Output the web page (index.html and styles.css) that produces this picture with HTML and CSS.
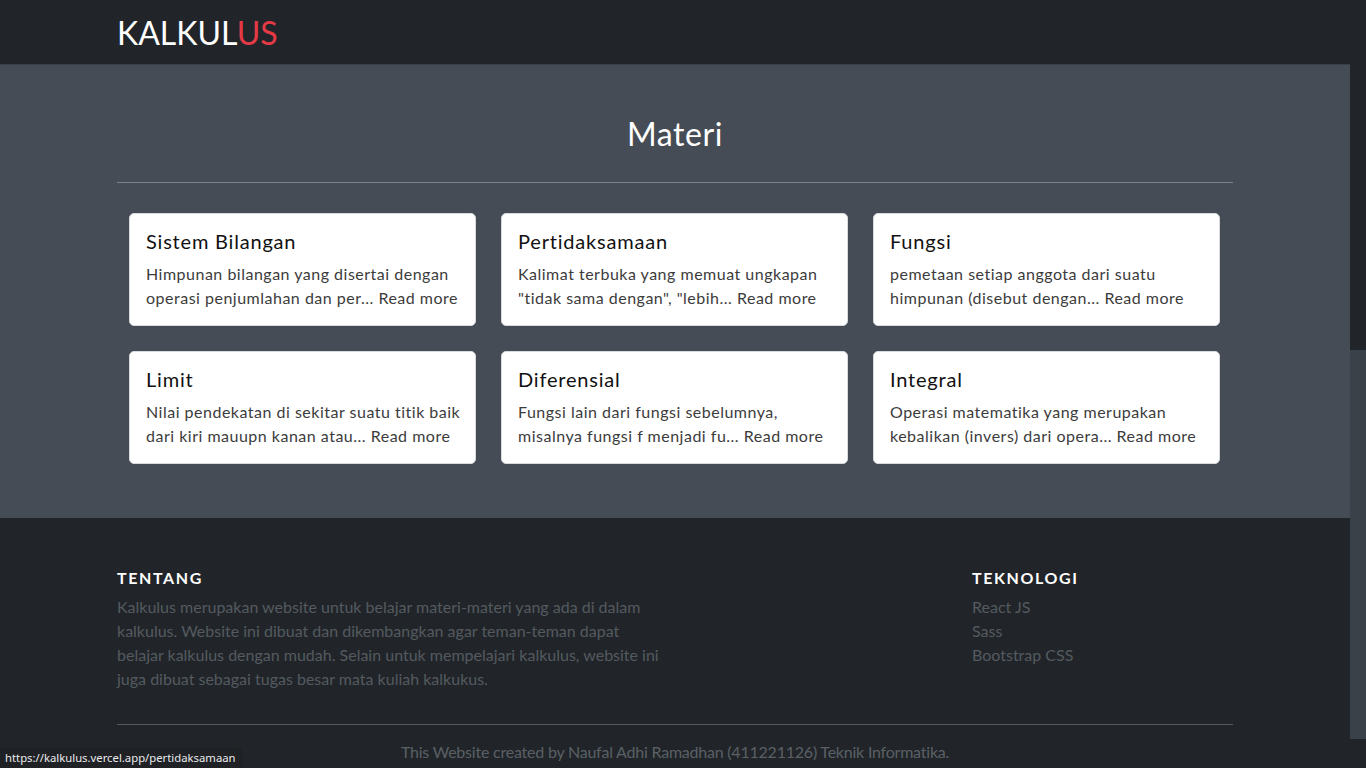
FILE: index.html
```html
<!DOCTYPE html>
<html lang="id">
<head>
<meta charset="utf-8">
<title>Kalkulus</title>
<link rel="stylesheet" href="styles.css">
</head>
<body>
<div class="app">
  <div class="page">
    <header class="navbar">
      <div class="container">
        <a class="brand" href="#">KALKUL<span class="brand-red">US</span></a>
      </div>
    </header>

    <section class="materi">
      <div class="container">
        <h2 class="section-title">Materi</h2>
        <hr class="divider">
        <div class="grid">
          <div class="card">
            <h5 class="card-title">Sistem Bilangan</h5>
            <p class="card-text">Himpunan bilangan yang disertai dengan<br>operasi penjumlahan dan per... <a href="#">Read more</a></p>
          </div>
          <div class="card">
            <h5 class="card-title">Pertidaksamaan</h5>
            <p class="card-text">Kalimat terbuka yang memuat ungkapan<br>"tidak sama dengan", "lebih... <a href="#">Read more</a></p>
          </div>
          <div class="card">
            <h5 class="card-title">Fungsi</h5>
            <p class="card-text">pemetaan setiap anggota dari suatu<br>himpunan (disebut dengan... <a href="#">Read more</a></p>
          </div>
          <div class="card">
            <h5 class="card-title">Limit</h5>
            <p class="card-text">Nilai pendekatan di sekitar suatu titik baik<br>dari kiri mauupn kanan atau... <a href="#">Read more</a></p>
          </div>
          <div class="card">
            <h5 class="card-title">Diferensial</h5>
            <p class="card-text">Fungsi lain dari fungsi sebelumnya,<br>misalnya fungsi f menjadi fu... <a href="#">Read more</a></p>
          </div>
          <div class="card">
            <h5 class="card-title">Integral</h5>
            <p class="card-text">Operasi matematika yang merupakan<br>kebalikan (invers) dari opera... <a href="#">Read more</a></p>
          </div>
        </div>
      </div>
    </section>

    <footer class="footer">
      <div class="container">
        <div class="footer-row">
          <div class="footer-about">
            <h6 class="footer-heading">TENTANG</h6>
            <p class="footer-text">Kalkulus merupakan website untuk belajar materi-materi yang ada di dalam kalkulus. Website ini dibuat dan dikembangkan agar teman-teman dapat belajar kalkulus dengan mudah. Selain untuk mempelajari kalkulus, website ini juga dibuat sebagai tugas besar mata kuliah kalkukus.</p>
          </div>
          <div class="footer-tech">
            <h6 class="footer-heading">TEKNOLOGI</h6>
            <ul class="footer-links">
              <li>React JS</li>
              <li>Sass</li>
              <li>Bootstrap CSS</li>
            </ul>
          </div>
        </div>
        <hr class="footer-divider">
        <p class="copyright">This Website created by Naufal Adhi Ramadhan (411221126) Teknik Informatika.</p>
      </div>
    </footer>
  </div>
  <div class="scrollbar"><div class="thumb"></div></div>
  <div class="status">https://kalkulus.vercel.app/pertidaksamaan</div>
</div>
</body>
</html>
```

FILE: styles.css
```css
* { box-sizing: border-box; }
html, body { margin: 0; padding: 0; height: 768px; overflow: hidden; }
body {
  font-family: "Lato", "Noto Sans", sans-serif;
  background: #212529;
  color: #212529;
}
.app { display: flex; height: 768px; position: relative; }
.page { flex: 1; min-width: 0; }
.container { width: 1140px; margin: 0 auto; padding: 0 12px; }

.navbar {
  height: 65px;
  background: #212529;
  border-bottom: 1px solid #3a4047;
  display: flex;
  align-items: center;
}
.brand {
  display: inline-block;
  color: #ffffff;
  text-decoration: none;
  font-size: 32px;
  font-weight: 400;
  letter-spacing: 0;
  line-height: 1;
  padding-top: 2px;
}
.brand-red { color: #e63946; }

.materi { background: #454c55; padding: 48px 0 54px; }
.section-title {
  margin: 0;
  text-align: center;
  color: #ffffff;
  font-size: 32px;
  font-weight: 400;
  letter-spacing: 0.6px;
  line-height: 40px;
  padding-top: 1px;
}
.divider { border: 0; border-top: 1px solid #7d828a; margin: 28px 0 30px; }
.grid {
  display: grid;
  grid-template-columns: repeat(3, 347px);
  gap: 25px;
  padding: 0 12px;
}
.card {
  background: #ffffff;
  border-radius: 5px;
  border: 1px solid #d8dadd;
  padding: 15px 4px 15px 16px;
  overflow: hidden;
}
.card-title {
  margin: 0 0 9px;
  font-size: 20px;
  font-weight: 400;
  letter-spacing: 0.8px;
  line-height: 24px;
  color: #111111;
}
.card-text {
  margin: 0;
  font-size: 16px;
  letter-spacing: 0.5px;
  line-height: 24px;
  color: #3c3c3c;
  white-space: nowrap;
}
.card-text a { color: #3c3c3c; text-decoration: none; }

.footer { background: #212529; padding-top: 50px; }
.footer-row { display: flex; }
.footer-about { width: 546px; }
.footer-tech { margin-left: 309px; }
.footer-heading {
  margin: 0 0 7px;
  color: #ffffff;
  font-size: 16px;
  font-weight: 700;
  letter-spacing: 1.6px;
  line-height: 20px;
}
.footer-text {
  margin: 0;
  color: #545a60;
  font-size: 16px;
  line-height: 24px;
}
.footer-links { list-style: none; margin: 0; padding: 0; color: #545a60; font-size: 16px; line-height: 24px; }
.footer-divider { border: 0; border-top: 1px solid #555a60; margin: 33px 0 15px; }
.copyright { margin: 0; text-align: center; color: #5a6066; font-size: 16px; letter-spacing: -0.22px; line-height: 24px; }

.scrollbar { width: 16px; background: #212529; padding-top: 350px; }
.thumb { height: 389px; background: #3b4148; }

.status {
  position: absolute;
  left: 0;
  bottom: 0;
  height: 20px;
  padding: 0 6px 0 5px;
  background: #202124;
  border-top-right-radius: 3px;
  color: #e8eaed;
  font-family: "Noto Sans", "DejaVu Sans", sans-serif;
  font-size: 11.3px;
  line-height: 20px;
}
```
